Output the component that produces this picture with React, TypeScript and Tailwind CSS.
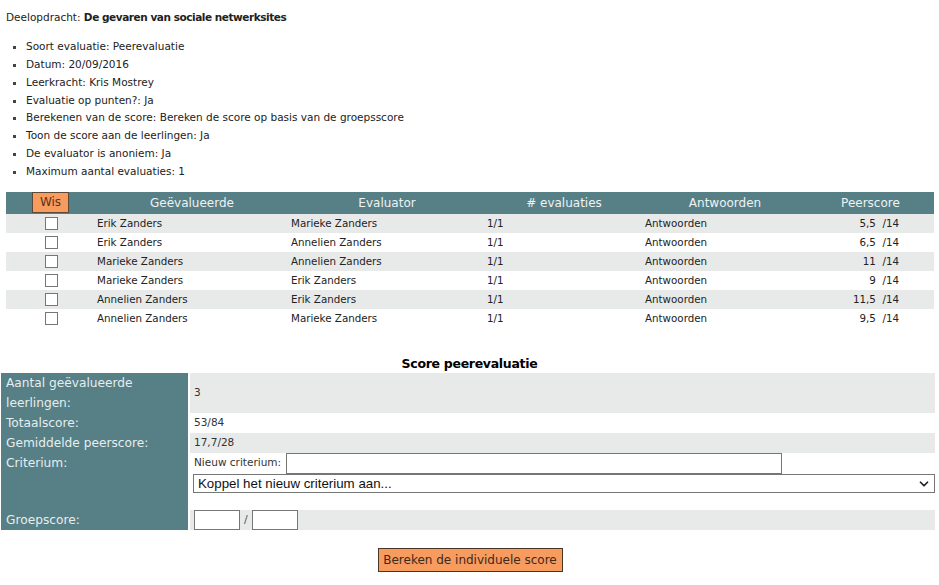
import React from 'react';
import { ChevronDown } from 'lucide-react';

const info = [
  'Soort evaluatie: Peerevaluatie',
  'Datum: 20/09/2016',
  'Leerkracht: Kris Mostrey',
  'Evaluatie op punten?: Ja',
  'Berekenen van de score: Bereken de score op basis van de groepsscore',
  'Toon de score aan de leerlingen: Ja',
  'De evaluator is anoniem: Ja',
  'Maximum aantal evaluaties: 1',
];

const rows = [
  { who: 'Erik Zanders', by: 'Marieke Zanders', score: '5,5' },
  { who: 'Erik Zanders', by: 'Annelien Zanders', score: '6,5' },
  { who: 'Marieke Zanders', by: 'Annelien Zanders', score: '11' },
  { who: 'Marieke Zanders', by: 'Erik Zanders', score: '9' },
  { who: 'Annelien Zanders', by: 'Erik Zanders', score: '11,5' },
  { who: 'Annelien Zanders', by: 'Marieke Zanders', score: '9,5' },
];

const cols = 'grid grid-cols-[89px_194px_196px_158px_164px_127px]';

export default function App() {
  return (
    <div className="w-[939px] h-[585px] overflow-hidden bg-white text-[#222] font-['DejaVu_Sans',sans-serif] text-[10.5px]">
      <p className="pl-[6px] pt-[10px] leading-[14px]">
        Deelopdracht: <b className="tracking-[-0.45px]">De gevaren van sociale netwerksites</b>
      </p>

      <ul className="list-[square] pl-[26px] mt-[14px] leading-[17.85px] marker:text-[#444]">
        {info.map((t) => (
          <li key={t}>{t}</li>
        ))}
      </ul>

      {/* Evaluaties */}
      <div className="ml-[6px] mt-[11px] w-[928px]">
        <div className={`${cols} h-[22px] items-center bg-[#577f86] text-[12px] text-[#eef3f3]`}>
          <div className="flex justify-center">
            <button className="w-[37px] h-[21px] bg-[#f89b5f] border border-[#5b4a3a] text-[#5a3418] text-[12px] leading-[19px]">
              Wis
            </button>
          </div>
          <div className="text-center">Geëvalueerde</div>
          <div className="text-center">Evaluator</div>
          <div className="text-center"># evaluaties</div>
          <div className="text-center">Antwoorden</div>
          <div className="text-center">Peerscore</div>
        </div>
        {rows.map((r, i) => (
          <div key={i} className={`${cols} h-[19px] items-center text-[10.3px] ${i % 2 === 0 ? 'bg-[#e8eaea]' : 'bg-white'}`}>
            <div className="flex justify-center">
              <span className="w-[13px] h-[13px] border border-[#767676] bg-white ml-[1px]" />
            </div>
            <div className="pl-[2px]">{r.who}</div>
            <div className="pl-[2px]">{r.by}</div>
            <div className="pl-[2px]">1/1</div>
            <div className="pl-[2px]">Antwoorden</div>
            <div className="text-right pr-[35px] whitespace-pre">{r.score}  /14</div>
          </div>
        ))}
      </div>

      <h2 className="mt-[27px] text-center font-bold text-[12.5px] tracking-[-0.3px] leading-[18px] text-black">
        Score peerevaluatie
      </h2>

      {/* Score */}
      <div className="ml-[1px] mt-0 w-[933px] grid grid-cols-[187px_1fr] gap-x-[2px] text-[12.2px]">
        <div className="bg-[#577f86] text-[#e6eeee] pl-[5px] leading-[20px]">Aantal geëvalueerde leerlingen:</div>
        <div className="bg-[#e8eaea] flex items-center pl-[4px] text-[10.5px] text-[#333]">3</div>

        <div className="bg-[#577f86] text-[#e6eeee] pl-[5px] h-[20px] leading-[20px]">Totaalscore:</div>
        <div className="bg-white flex items-center pl-[4px] text-[10.5px] text-[#333]">53/84</div>

        <div className="bg-[#577f86] text-[#e6eeee] pl-[5px] h-[20px] leading-[20px]">Gemiddelde peerscore:</div>
        <div className="bg-[#e8eaea] flex items-center pl-[4px] text-[10.5px] text-[#333]">17,7/28</div>

        <div className="bg-[#577f86] text-[#e6eeee] pl-[5px] h-[57px] leading-[20px]">Criterium:</div>
        <div className="bg-white pl-[3px] text-[10.5px] text-[#333]">
          <div className="flex items-center h-[21px]">
            <span className="w-[93px] shrink-0 pl-[1px]">Nieuw criterium:</span>
            <input type="text" className="w-[496px] h-[21px] border border-[#767676] bg-white outline-none" />
          </div>
          <div className="relative w-[742px] h-[19px] border border-[#767676] bg-white">
            <span className="absolute left-[4px] top-0 leading-[17px] font-['Liberation_Sans',sans-serif] text-[13.3px] text-[#111]">
              Koppel het nieuw criterium aan...
            </span>
            <ChevronDown className="absolute right-[3px] top-[2px] w-[14px] h-[14px] text-[#222]" strokeWidth={3} />
          </div>
        </div>

        <div className="bg-[#577f86] text-[#e6eeee] pl-[5px] h-[20px] leading-[20px]">Groepscore:</div>
        <div className="bg-[#e8eaea] flex items-center pl-[4px] text-[11px] text-[#555]">
          <input type="text" className="w-[46px] h-[20px] border border-[#767676] bg-white outline-none" />
          <span className="px-[4px]">/</span>
          <input type="text" className="w-[46px] h-[20px] border border-[#767676] bg-white outline-none" />
        </div>
      </div>

      <div className="flex justify-center mt-[18px]">
        <button className="w-[185px] h-[24px] whitespace-nowrap bg-[#f89b5f] border border-[#4a3626] text-[#3b2a1e] text-[12px] leading-[22px] ml-[1px]">
          Bereken de individuele score
        </button>
      </div>
    </div>
  );
}
